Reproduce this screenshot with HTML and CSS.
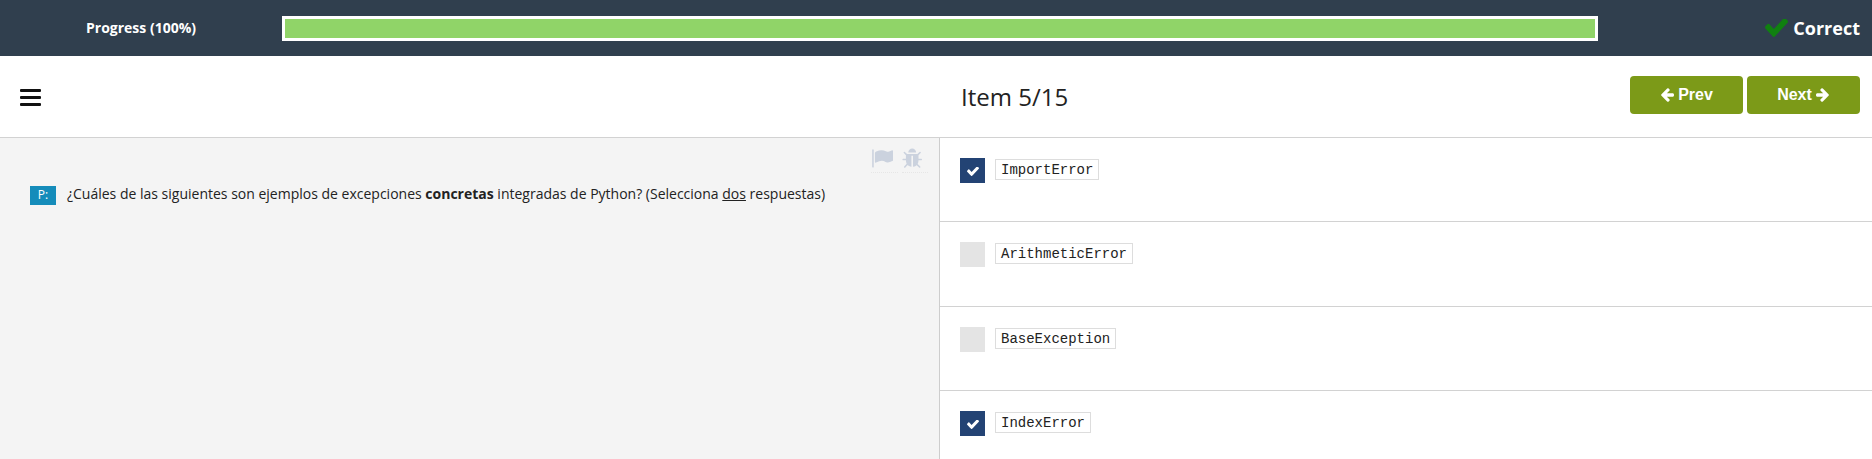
FILE: index.html
```html
<!DOCTYPE html>
<html lang="es">
<head>
<meta charset="utf-8">
<title>Item 5/15</title>
<link rel="stylesheet" href="styles.css">
</head>
<body>
<svg class="sprite" width="0" height="0">
  <symbol id="check" viewBox="121 402 1550 1120" preserveAspectRatio="none"><path d="M1671 566q0 40-28 68l-724 724-136 136q-28 28-68 28t-68-28l-136-136-362-362q-28-28-28-68t28-68l136-136q28-28 68-28t68 28l294 295 656-657q28-28 68-28t68 28l136 136q28 28 28 68z"/></symbol>
  <symbol id="arrow" viewBox="64 154 1600 1612"><path d="M1664 896v128q0 53-32.500 90.500t-84.500 37.500h-704l293 294q38 36 38 90t-38 90l-75 76q-37 37-90 37-52 0-91-37l-651-652q-37-37-37-90 0-52 37-91l651-650q38-38 91-38 52 0 90 38l75 74q38 38 38 91t-38 91l-293 293h704q52 0 84.500 37.500t32.500 90.500z"/></symbol>
</svg>
<header class="topbar">
  <div class="progress-label">Progress (100%)</div>
  <div class="progress"><div class="progress-fill" style="width:100%"></div></div>
  <div class="result"><svg class="result-icon"><use href="#check"/></svg><span>Correct</span></div>
</header>
<div class="toolbar">
  <div class="menu"><i></i><i></i><i></i></div>
  <h1 class="title">Item 5/15</h1>
  <div class="nav">
    <button class="btn"><svg class="arrow"><use href="#arrow"/></svg><span>Prev</span></button>
    <button class="btn"><span>Next</span><svg class="arrow flip"><use href="#arrow"/></svg></button>
  </div>
</div>
<main class="content">
  <section class="question">
    <div class="tools">
      <span class="tool flag"><svg width="22" height="22" viewBox="0 0 1792 1792"><path d="M224 256v1376q0 13-9.500 22.500t-22.500 9.500h-64q-13 0-22.500-9.500t-9.500-22.500v-1376q0-64 64-64t64 64zm1568 64v763q0 25-12.500 38.500t-39.500 27.500q-215 116-369 116-61 0-123.500-22t-108.500-48-115.500-48-142.500-22q-192 0-464 146-17 9-33 9-26 0-45-19t-19-45v-742q0-32 31-55 21-14 79-43 236-120 421-120 107 0 200 29t219 88q38 19 88 19 54 0 117.500-21t110-47 88-47 54.500-21q26 0 45 19t19 45z"/></svg></span>
      <span class="tool bug"><svg width="22" height="22" viewBox="0 0 1792 1792"><path d="M1632 1024q0 26-19 45t-45 19h-224q0 171-67 290l208 209q19 19 19 45t-19 45q-18 19-45 19t-45-19l-198-197q-5 5-15 13t-42 28.500-65 36.500-82 29-97 13v-896h-128v896q-51 0-101.500-13.500t-87-33-66-39-43.500-32.500l-15-14-183 207q-20 21-48 21-24 0-43-16-19-18-20.500-44.500t15.500-46.500l202-227q-58-114-58-274h-224q-26 0-45-19t-19-45 19-45 45-19h224v-294l-173-173q-19-19-19-45t19-45 45-19 45 19l173 173h844l173-173q19-19 45-19t45 19 19 45-19 45l-173 173v294h224q26 0 45 19t19 45zm-480-576h-640q0-133 93.500-226.500t226.500-93.500 226.500 93.500 93.500 226.500z"/></svg></span>
    </div>
    <div class="prompt">
      <span class="badge">P:</span>
      <p class="text">¿Cuáles de las siguientes son ejemplos de excepciones <b>concretas</b> integradas de Python? (Selecciona <u>dos</u> respuestas)</p>
    </div>
  </section>
  <section class="answers">
    <div class="answer"><span class="box on"><svg><use href="#check"/></svg></span><code>ImportError</code></div>
    <div class="answer"><span class="box"></span><code>ArithmeticError</code></div>
    <div class="answer"><span class="box"></span><code>BaseException</code></div>
    <div class="answer"><span class="box on"><svg><use href="#check"/></svg></span><code>IndexError</code></div>
  </section>
</main>
</body>
</html>
```
FILE: styles.css
```css
* { box-sizing: border-box; }
html, body { height: 100%; }
body {
  margin: 0;
  display: flex;
  flex-direction: column;
  overflow: hidden;
  background: #fff;
  color: #222;
  font-family: "Open Sans", sans-serif;
}
svg { display: block; fill: currentColor; }
.sprite { position: absolute; }
.topbar {
  flex: none;
  display: flex;
  align-items: flex-start;
  height: 56px;
  padding-right: 12px;
  background: #303f4e;
  color: #fff;
  font-weight: 700;
}
.progress-label {
  width: 282px;
  padding: 18px 0 0 86px;
  font-size: 14px;
  line-height: 20px;
}
.progress {
  width: 1316px;
  height: 25px;
  margin-top: 16px;
  border: 3px solid #fff;
}
.progress-fill { height: 100%; background: #90d468; }
.result {
  display: flex;
  gap: 5px;
  margin-left: auto;
  padding-top: 16px;
  font-size: 18px;
  line-height: 24px;
}
.result-icon { width: 23px; height: 18px; margin-top: 3px; color: #108010; }
.toolbar {
  flex: none;
  display: flex;
  height: 82px;
  padding: 0 12px 0 20px;
  border-bottom: 1px solid #d2d2d2;
}
.menu { display: grid; gap: 4px; align-content: start; width: 21px; padding-top: 33px; }
.menu i { height: 3px; border-radius: 1px; background: #111; }
.title {
  margin: 23px 0 0 920px;
  font-size: 24px;
  font-weight: 400;
  line-height: 36px;
}
.nav { display: flex; gap: 4px; margin: 20px 0 0 auto; }
.btn {
  display: flex;
  align-items: center;
  justify-content: center;
  gap: 4px;
  width: 113px;
  height: 38px;
  padding: 0;
  border: 0;
  border-radius: 4px;
  background: #7c9a18;
  color: #fff;
  font: 700 16px/20px "Liberation Sans", Arial, sans-serif;
}
.arrow { width: 14px; height: 14px; }
.flip { transform: scaleX(-1); }
.content { flex: 1; display: flex; min-height: 0; }
.question {
  width: 940px;
  border-right: 1px solid #cdcdcd;
  background: #f4f4f4;
}
.tools {
  display: flex;
  justify-content: flex-end;
  gap: 4px;
  height: 35px;
  padding: 9px 11px 0 0;
  color: #cbd2de;
}
.tool { height: 26px; width: 27px; border-bottom: 1px dotted #e6e6e6; }
.bug { width: 26px; }
.prompt { display: flex; gap: 11px; padding: 13px 0 0 30px; }
.badge {
  width: 26px;
  height: 19px;
  background: #158cba;
  color: #fff;
  font-size: 12px;
  line-height: 18px;
  text-align: center;
}
.text { margin: -3px 0 0; font-size: 14px; line-height: 22px; white-space: nowrap; }
.answers { flex: 1; }
.answer {
  display: flex;
  gap: 10px;
  height: 84.33px;
  padding: 20px 0 0 20px;
  border-bottom: 1px solid #d2d2d2;
}
.box {
  display: flex;
  align-items: center;
  justify-content: center;
  width: 25px;
  height: 25px;
  background: #e4e4e4;
}
.box.on { background: #234374; color: #fff; }
.box svg { width: 12px; height: 9px; margin-top: 2px; }
code {
  height: 21px;
  margin-top: 1px;
  padding: 0 5px;
  border: 1px solid #ddd;
  font: 14px/21px "Liberation Mono", "Courier New", monospace;
}
```
